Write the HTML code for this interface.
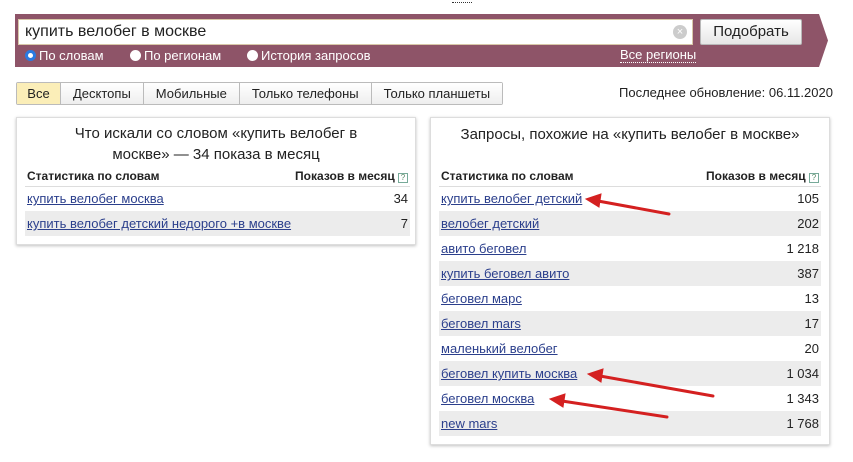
<!DOCTYPE html>
<html><head><meta charset="utf-8"><style>
*{margin:0;padding:0;box-sizing:border-box}
body{width:853px;height:462px;background:#fff;font-family:"Liberation Sans",Arial,sans-serif;position:relative;overflow:hidden;color:#222}
.a{position:absolute}
.bar{left:15px;top:14px;width:797px;height:53px;background:#8e5468}
.input{left:18px;top:19px;width:675px;height:26px;background:#fff;border:1px solid #d8c8a8;font-size:16px;padding:3px 6px;color:#222}
.btn{left:700px;top:19px;width:102px;height:26px;background:linear-gradient(#fff,#e6e6e6);border:1px solid #b8b8b8;border-radius:2px;font-size:15px;text-align:center;line-height:24px}
.rad{top:48px;font-size:13px;color:#fff}
.rad i{display:inline-block;width:11px;height:11px;border-radius:50%;background:#fff;vertical-align:-1px;margin-right:3px}
.tabs{left:16px;top:82px;height:23px;display:flex;border:1px solid #bbb;border-radius:2px;font-size:13px}
.tabs div{padding:0 12px;line-height:21px;border-right:1px solid #bbb;background:linear-gradient(#fff,#eee);white-space:nowrap}
.box{background:#fff;border:1px solid #ddd;box-shadow:0 1px 3px rgba(0,0,0,.25)}
.t{font-size:15px;text-align:center;line-height:21px;color:#222}
table{border-collapse:collapse;font-size:13px;position:absolute}
th{font-size:12px;font-weight:bold;text-align:left;height:20px;border-bottom:1px solid #ddd;padding:0 2px;white-space:nowrap}
th.r{text-align:right}
td{height:25px;padding:0 2px;white-space:nowrap}
td.r{text-align:right}
tr.g td{background:#ececec}
a{color:#2b3f8c;text-decoration:underline}
.q{display:inline-block;width:10px;height:10px;border:1px solid #7a9;font-size:8px;line-height:8px;text-align:center;color:#586;vertical-align:0;font-weight:normal}
</style></head><body>
<div class="a" style="left:452px;top:2px;width:20px;border-top:1px dotted #333"></div>
<div class="a bar"></div>
<svg class="a" style="left:811px;top:14px" width="18" height="53"><polygon points="0,0 8,0 17,26.5 8,53 0,53" fill="#8e5468"/></svg>
<div class="a input">купить велобег в москве</div>
<div class="a" style="left:673px;top:25px;width:14px;height:14px;border-radius:50%;background:#ccc;color:#fff;font-size:11px;text-align:center;line-height:14px">×</div>
<div class="a btn">Подобрать</div>
<div class="a rad" style="left:25px"><i style="background:#fff;border:3px solid #2a7ae2"></i>По словам</div>
<div class="a rad" style="left:130px"><i></i>По регионам</div>
<div class="a rad" style="left:247px"><i></i>История запросов</div>
<div class="a rad" style="left:620px;border-bottom:1px dotted #fff;line-height:14px">Все регионы</div>
<div class="a tabs"><div style="background:#fbeeb8;width:44px;padding:0;text-align:center">Все</div><div>Десктопы</div><div>Мобильные</div><div>Только телефоны</div><div style="border:0">Только планшеты</div></div>
<div class="a" style="left:619px;top:85px;font-size:13px">Последнее обновление: 06.11.2020</div>

<div class="a box" style="left:16px;top:117px;width:400px;height:128px"></div>
<div class="a t" style="left:16px;top:123px;width:400px">Что искали со словом «купить велобег в<br>москве» — 34 показа в месяц</div>
<table style="left:25px;top:166px;width:382px">
<tr><th>Статистика по словам</th><th class="r">Показов в месяц <span class="q">?</span></th></tr>
<tr><td><a>купить велобег москва</a></td><td class="r">34</td></tr>
<tr class="g"><td><a>купить велобег детский недорого +в москве</a></td><td class="r">7</td></tr>
</table>

<div class="a box" style="left:430px;top:117px;width:400px;height:328px"></div>
<div class="a t" style="left:430px;top:124px;width:400px">Запросы, похожие на «купить велобег в москве»</div>
<table style="left:439px;top:166px;width:382px">
<tr><th>Статистика по словам</th><th class="r">Показов в месяц <span class="q">?</span></th></tr>
<tr><td><a>купить велобег детский</a></td><td class="r">105</td></tr>
<tr class="g"><td><a>велобег детский</a></td><td class="r">202</td></tr>
<tr><td><a>авито беговел</a></td><td class="r">1 218</td></tr>
<tr class="g"><td><a>купить беговел авито</a></td><td class="r">387</td></tr>
<tr><td><a>беговел марс</a></td><td class="r">13</td></tr>
<tr class="g"><td><a>беговел mars</a></td><td class="r">17</td></tr>
<tr><td><a>маленький велобег</a></td><td class="r">20</td></tr>
<tr class="g"><td><a>беговел купить москва</a></td><td class="r">1 034</td></tr>
<tr><td><a>беговел москва</a></td><td class="r">1 343</td></tr>
<tr class="g"><td><a>new mars</a></td><td class="r">1 768</td></tr>
</table>

<svg class="a" style="left:0;top:0" width="853" height="462">
<g stroke="#d42020" stroke-width="3" fill="#d42020" stroke-linecap="round">
<line x1="669" y1="214" x2="598" y2="201"/><polygon points="586,199 601,194 599,207" stroke-width="1"/>
<line x1="713" y1="396" x2="600" y2="376"/><polygon points="588,374 603,369 601,382" stroke-width="1"/>
<line x1="667" y1="417" x2="562" y2="401"/><polygon points="550,399 565,394 563,407" stroke-width="1"/>
</g></svg>
</body></html>
